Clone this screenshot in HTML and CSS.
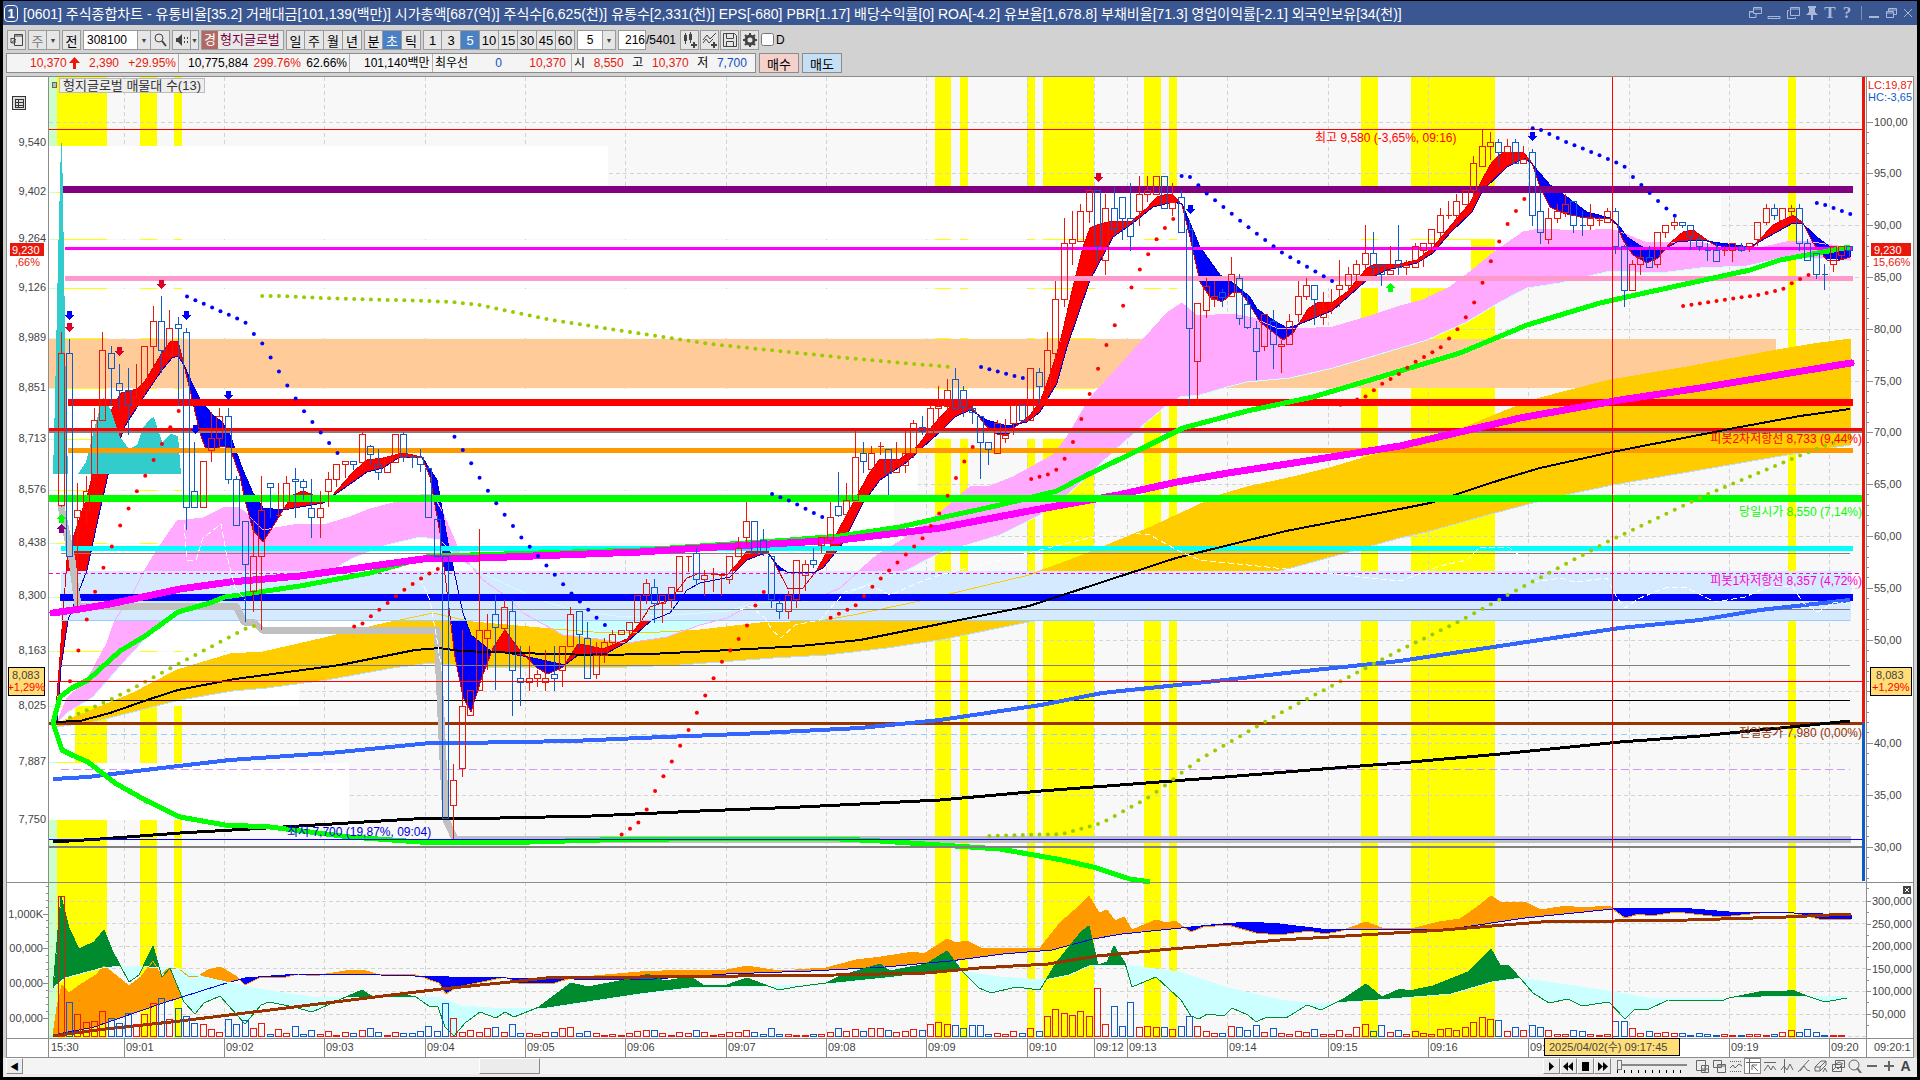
FILE: index.html
```html
<!DOCTYPE html>
<html lang="ko">
<head>
    <meta charset="UTF-8">
    <meta name="viewport" content="width=device-width, initial-scale=1.0">
    <title>[0601] 주식종합차트</title>
    <link rel="stylesheet" href="styles.css">
</head>
<body>
    <div class="window">
        <header class="titlebar">
            <span class="badge">1</span>
            <h1>[0601] 주식종합차트 - 유통비율[35.2] 거래대금[101,139(백만)] 시가총액[687(억)] 주식수[6,625(천)] 유통수[2,331(천)] EPS[-680] PBR[1.17] 배당수익률[0] ROA[-4.2] 유보율[1,678.8] 부채비율[71.3] 영업이익률[-2.1] 외국인보유[34(천)]</h1>
            <div class="window-buttons">
                <button aria-label="분리"><svg width="14" height="14"><path d="M5.5 1.5h8v6h-8zM8 7.5v4H1.500v-6h4M5 3h9M1 6h5"/></svg></button>
                <button aria-label="접기"><svg width="14" height="14"><path d="M1 10.500h12v2H1z"/></svg></button>
                <button aria-label="복제"><svg width="14" height="14"><path d="M4.500 1.500h9v8h-9zM4 3h10M3 4.500H1.500v8h8V11"/></svg></button>
                <button aria-label="고정"><svg width="14" height="14"><path class="fill" d="M3 0h8v2h-1v4l3 3H8v5H6V9H1l3-3V2H3z"/></svg></button>
                <button class="glyph" aria-label="글꼴">T</button>
                <button class="glyph" aria-label="도움말">?</button>
                <i class="bar"></i>
                <button aria-label="최소화"><svg width="12" height="14"><path class="fill" d="M1 10h10v2H1z"/></svg></button>
                <button aria-label="이전 크기"><svg width="12" height="14"><path d="M3.500 5V2.500h8v6H9M1.500 5.500h7v6h-7zM1 7h8M3 4h9"/></svg></button>
                <button aria-label="닫기"><svg width="12" height="14"><path d="M2 3l8 8M10 3l-8 8"/></svg></button>
            </div>
        </header>

        <div class="toolbar">
            <button class="btn" aria-label="패널"><svg width="14" height="14"><path d="M4.500 1.500h8v11h-8zM4 3h9M1 5.500h4M1 5v5M1 10l5-4M2 10h3V7"/></svg></button>
            <div class="group">
                <button class="btn muted">주</button><button class="btn arrow" aria-label="주기 선택">▼</button>
            </div>
            <button class="btn">전</button>
            <div class="group">
                <input class="code" type="text" value="308100" aria-label="종목코드"><button class="btn arrow" aria-label="종목 목록">▼</button><button class="btn" aria-label="찾기"><svg width="14" height="14"><circle cx="6" cy="5" r="4"/><path d="M9 8l4 5" stroke-width="2"/></svg></button>
            </div>
            <div class="group">
                <button class="btn" aria-label="소리"><svg width="14" height="14"><path class="fill" d="M1 5h2l4-4v12L3 9H1z"/><path d="M9 5h1M9 9h1M12 5h1M12 9h1" stroke-width="2"/></svg></button><button class="btn arrow slim" aria-label="소리 설정">▼</button>
            </div>
            <div class="group name">
                <span class="warn">경</span><span class="stock">형지글로벌</span>
            </div>
            <div class="group">
                <button class="btn">일</button><button class="btn">주</button><button class="btn">월</button><button class="btn">년</button>
            </div>
            <div class="group">
                <button class="btn">분</button><button class="btn on">초</button><button class="btn">틱</button>
            </div>
            <div class="group">
                <button class="btn">1</button><button class="btn">3</button><button class="btn on">5</button><button class="btn">10</button><button class="btn">15</button><button class="btn">30</button><button class="btn">45</button><button class="btn">60</button>
            </div>
            <div class="group">
                <input class="tick" type="text" value="5" aria-label="간격"><button class="btn arrow" aria-label="간격 선택">▼</button>
            </div>
            <div class="group count">
                <input class="bars" type="text" value="216" aria-label="봉 개수"><span>/5401</span>
            </div>
            <div class="group tools">
                <button class="btn" aria-label="봉 추가"><svg width="16" height="16"><path class="fill" d="M2 3h3v6H2zM7 2h3v6H7zM3 1h1v11H3zM8 0h1v11H8z"/><path d="M9 13h6M12 10v6" stroke-width="2"/></svg></button>
                <button class="btn" aria-label="지표 추가"><svg width="16" height="16"><path d="M1 8l4-5 3 4 6-6M1 11l3-4 3 4 4-4"/><path d="M9 13h6M12 10v6" stroke-width="2"/></svg></button>
                <button class="btn" aria-label="저장"><svg width="16" height="16"><path d="M1.500 1.500h11l2 2v11h-13zM4.500 1.500v5h7v-5M4.500 14.500v-5h7v5"/></svg></button>
                <button class="btn" aria-label="설정"><svg width="16" height="16"><circle cx="8" cy="8" r="4" stroke-width="3"/><path d="M8 1v2M8 13v2M1 8h2M13 8h2M3 3l2 2M11 11l2 2M13 3l-2 2M3 13l2-2" stroke-width="2"/></svg></button>
            </div>
            <label class="check"><input type="checkbox">D</label>
        </div>

        <div class="quote">
            <div class="cells">
                <div class="cell price"><b class="up">10,370<svg width="11" height="12"><path d="M5.500 0L11 6H7v6H4V6H0z"/></svg></b><b class="up">2,390</b><b class="up">+29.95%</b></div>
                <div class="cell volume"><b>10,775,884</b><b class="up">299.76%</b><b>62.66%</b></div>
                <div class="cell amount"><b>101,140백만</b></div>
                <div class="cell best"><b>최우선</b><b class="down">0</b><b class="up">10,370</b></div>
                <div class="cell range"><b>시</b><b class="up">8,550</b><b>고</b><b class="up">10,370</b><b>저</b><b class="down">7,700</b></div>
            </div>
            <button class="buy">매수</button>
            <button class="sell">매도</button>
        </div>

        <main class="panel">
            <svg id="chart" viewBox="7 77 1906 980" role="img" aria-label="형지글로벌 5초봉 차트"></svg>
            <span class="legend-mark"></span>
            <span class="legend">형지글로벌 매물대 수(13)</span>
        </main>

        <footer class="bottom">
            <button class="scroll-left" aria-label="왼쪽으로">◀</button>
            <div class="track"><div class="thumb"></div></div>
            <div class="player">
                <button aria-label="재생"><svg width="11" height="11"><path d="M3 1l5 4.500L3 10z"/></svg></button>
                <button aria-label="뒤로"><svg width="11" height="11"><path d="M5 1v9L0 5.500zM10 1v9L5 5.500z"/></svg></button>
                <button aria-label="정지"><svg width="11" height="11"><path d="M2 1h7v9H2z"/></svg></button>
                <button aria-label="앞으로"><svg width="11" height="11"><path d="M1 1v9l5-4.500zM6 1v9l5-4.500z"/></svg></button>
            </div>
            <div class="speed"><input type="range" min="0" max="9" value="0" aria-label="속도"><span class="notches"></span></div>
            <div class="draw">
                <button aria-label="창 추가"><svg width="14" height="14"><path d="M1.500 1.500h9v10h-9zM6.500 6.500h7v7h-7zM10 6v8M6 10h8"/></svg></button>
                <button aria-label="창 복사"><svg width="14" height="14"><path d="M1.500 1.500h8v7h-8zM5.500 5.500h8v8h-8zM5 7h9"/></svg></button>
                <button aria-label="폭 맞춤"><svg width="14" height="14"><path d="M1 2.500h12" stroke-dasharray="1 1"/><path d="M1 12.500h12" stroke-dasharray="1 1"/><path d="M1 9l3-3 2 3 4-4 3 2"/></svg></button>
                <button class="on" aria-label="십자선"><svg width="14" height="14"><path d="M0 3.500h14M3.500 0v14M6 6l6 6M6 6h5M6 6v5"/></svg></button>
                <button aria-label="수평선"><svg width="14" height="14"><path d="M1 3.500h12M1 12l4-6 3 5 2-4 3 4"/></svg></button>
                <button aria-label="수직선"><svg width="14" height="14"><path d="M4.500 0v14M1 11l3-4 3 4 3-6 3 6"/></svg></button>
                <button aria-label="추세선"><svg width="14" height="14"><path d="M1 13L12 1M3 12l4-5 3 4 3 1"/></svg></button>
                <button aria-label="전체 지우기"><svg width="14" height="14"><path d="M1 8l6-6h5L6 8zM1 8v4h5V8M6 12l6-6V2"/><path d="M9 13l2-4 2 4" /></svg></button>
                <button aria-label="차트 겹치기"><svg width="14" height="14"><path d="M4.500 1.500h9v7h-9zM1.500 5.500h9v7h-9zM2 11l3-3 2 2 3-3M5 5l3-2 4 2"/></svg></button>
                <button aria-label="확대경"><svg width="14" height="14"><circle cx="6" cy="6" r="5"/><path d="M9 9l4 5" stroke-width="2"/></svg></button>
                <button aria-label="축소"><svg width="14" height="14"><path d="M2 7h10" stroke-width="2"/></svg></button>
                <button aria-label="확대"><svg width="14" height="14"><path d="M2 7h10M7 2v10" stroke-width="2"/></svg></button>
                <button class="letter" aria-label="자동">A</button>
            </div>
        </footer>
    </div>
    <script src="chart.js"></script>
</body>
</html>
```
FILE: styles.css
```css
* {
    box-sizing: border-box;
}

body {
    margin: 0;
    background: #000;
    font-family: "Liberation Sans", "Noto Sans CJK KR", sans-serif;
    font-size: 13px;
    color: #000;
}

button,
input {
    font-family: inherit;
    font-size: 13px;
    padding: 0;
    margin: 0;
    border-radius: 0;
}

svg {
    display: block;
    fill: none;
    stroke: #444;
}

svg .fill {
    fill: #444;
    stroke: none;
}

.window {
    display: flex;
    flex-direction: column;
    margin: 1px 3px 3px;
    background: #d2d2d2;
}

/* title bar */
.titlebar {
    display: flex;
    align-items: center;
    height: 24px;
    padding: 0 3px 0 1px;
    background: #3a5792;
    color: #fff;
}

.badge {
    width: 14px;
    height: 17px;
    line-height: 15px;
    border: 1px solid #fff;
    border-radius: 4px;
    text-align: center;
    font-weight: bold;
}

.titlebar h1 {
    flex: 1;
    margin: 0 0 0 5px;
    font-size: 14px;
    font-weight: normal;
    white-space: nowrap;
    overflow: hidden;
}

.window-buttons {
    display: flex;
    align-items: center;
    gap: 5px;
}

.window-buttons button {
    border: 0;
    background: none;
    color: #a9b8d8;
}

.window-buttons svg {
    stroke: #a9b8d8;
}

.window-buttons .fill {
    fill: #a9b8d8;
}

.window-buttons .glyph {
    width: 12px;
    font-family: "Liberation Serif", serif;
    font-size: 17px;
    font-weight: bold;
    line-height: 14px;
}

.window-buttons .bar {
    width: 1px;
    height: 14px;
    margin: 0 1px 0 3px;
    background: #8090b0;
}

/* toolbar */
.toolbar {
    display: flex;
    gap: 2px;
    height: 26px;
    padding: 5px 4px 0;
}

.group {
    display: flex;
}

.btn {
    display: flex;
    align-items: center;
    justify-content: center;
    width: 19px;
    height: 20px;
    border: 1px solid #9a9a9a;
    background: #e6e6e6;
}

.group .btn + .btn,
.group input + .btn {
    border-left: 0;
}

.btn.on {
    background: #4a80c4;
    color: #fff;
}

.btn.muted {
    color: #777;
}

.btn.arrow {
    width: 13px;
    font-size: 7px;
    color: #444;
}

.btn.slim {
    width: 8px;
}

.toolbar input[type="text"] {
    height: 20px;
    border: 1px solid #9a9a9a;
    background: #fff;
    font-size: 12px;
}

.code {
    width: 55px;
    padding-left: 3px !important;
}

.tick {
    width: 26px;
    text-align: center;
}

.bars {
    width: 28px;
    text-align: right;
}

.count {
    width: 60px;
    font-size: 12px;
    line-height: 20px;
}

.name {
    width: 83px;
    height: 20px;
    border: 1px solid #9a9a9a;
    background: #e8e8e8;
    line-height: 18px;
}

.warn {
    width: 16px;
    background: #b06a66;
    color: #fff;
    text-align: center;
}

.stock {
    padding-left: 2px;
    color: #7a0040;
}

.tools {
    gap: 1px;
}

.tools .btn {
    border: 1px solid #9a9a9a !important;
}

.check {
    display: flex;
    align-items: center;
    gap: 2px;
    height: 19px;
    font-size: 12px;
}

.check input {
    width: 13px;
    height: 13px;
}

/* quote row */
.quote {
    display: flex;
    gap: 3px;
    height: 25px;
    padding: 2px 3px 3px;
}

.quote b {
    font-weight: normal;
}

.cells {
    display: flex;
    width: 750px;
    border: 1px solid #8c8c8c;
    background: #f4f4f4;
    font-size: 12px;
    line-height: 18px;
    white-space: nowrap;
}

.cell {
    display: flex;
    justify-content: space-between;
    padding: 0 2px;
    border-right: 1px solid #b0b0b0;
}

.cell:last-child {
    border: 0;
}

.price {
    width: 172px;
    padding-left: 23px;
}

.price b:first-child {
    display: flex;
    align-items: center;
    gap: 2px;
}

.price svg {
    fill: #e8190c;
    stroke: none;
}

.volume {
    width: 171px;
    padding-left: 9px;
}

.amount {
    width: 83px;
    padding-left: 14px;
}

.best {
    width: 139px;
    padding-right: 5px;
}

.range {
    width: 183px;
    padding-right: 8px;
}

.up {
    color: #e8190c;
}

.down {
    color: #0f4fc4;
}

.buy,
.sell {
    width: 40px;
    border: 1px solid #8c8c8c;
    background: #f6d0cb;
}

.sell {
    background: #c5dff5;
}

/* chart */
.panel {
    position: relative;
    margin: 0 3px;
    border: 1px solid #8c8c8c;
    background: #fff;
}

#chart {
    width: 100%;
    height: auto;
    stroke: none;
    shape-rendering: crispEdges;
}

#chart text {
    font-size: 11px;
}

#chart .note {
    font-size: 12px;
}

.legend {
    position: absolute;
    left: 52px;
    top: 1px;
    padding: 0 3px;
    border: 1px solid #bbb;
    background: #eee;
    color: #333;
    line-height: 13px;
}

.legend-mark {
    position: absolute;
    left: 45px;
    top: 5px;
    width: 5px;
    height: 6px;
    border: 1px solid #666;
    background: #bbb;
}

/* bottom bar */
.bottom {
    display: flex;
    align-items: center;
    height: 19px;
    padding: 0 3px 3px;
    background: #ececec;
}

.bottom button {
    display: flex;
    align-items: center;
    justify-content: center;
    width: 17px;
    height: 16px;
    border: 1px solid #888;
    border-top-color: #fff;
    border-left-color: #fff;
    background: #ececec;
    font-size: 9px;
}

.track {
    flex: 1;
    height: 16px;
    background: #f4f4f4;
}

.thumb {
    width: 61px;
    height: 16px;
    margin-left: 30%;
    border: 1px solid #888;
    border-top-color: #fff;
    border-left-color: #fff;
    background: #ececec;
}

.player {
    display: flex;
}

.player svg {
    fill: #000;
    stroke: none;
}

.speed {
    width: 82px;
    padding: 0 6px;
}

.speed input {
    display: block;
    width: 70px;
    height: 10px;
    appearance: none;
    background: linear-gradient(#888, #888) center / 100% 2px no-repeat;
}

.speed input::-webkit-slider-thumb {
    appearance: none;
    width: 5px;
    height: 10px;
    border: 1px solid #777;
    background: #eee;
}

.notches {
    display: block;
    height: 3px;
    background: repeating-linear-gradient(90deg, #000 0 1px, transparent 1px 7px);
}

.draw {
    display: flex;
}

.bottom .draw button {
    border: 0;
}

.draw svg {
    stroke: #666;
}

.bottom .draw .on {
    background: #fff;
    border: 1px solid #888;
}

.bottom .draw .letter {
    font-size: 14px;
    font-weight: bold;
    color: #444;
}
```
FILE: chart.js
```js
const chart = document.getElementById('chart');
const LEFT = 49, RIGHT = 1862;
const RED = '#e8190c', BLUE = '#105bc8';
const barX = i => 53.3 + 8.358 * i;

function add(tag, attrs, text, parent) {
    const el = document.createElementNS('http://www.w3.org/2000/svg', tag);
    for (const k in attrs) el.setAttribute(k, attrs[k]);
    if (text) el.textContent = text;
    (parent || chart).appendChild(el);
    return el;
}
const rect = (x1, y1, x2, y2, fill) => add('rect', { x: x1, y: y1, width: x2 - x1, height: y2 - y1, fill });
const path = (d, stroke, w, more) => add('path', { d, stroke, fill: 'none', 'stroke-width': w || 1, ...more });
const line = (pts, stroke, w, more) => add('polyline', { points: pts, stroke, fill: 'none', 'stroke-width': w || 1, 'stroke-linejoin': 'round', ...more });
const text = (x, y, str, fill, more) => add('text', { x, y, fill, ...more }, str);

function parse(str) {
    return str.trim().split(/\s+/).map(p => p.split(',').map(Number));
}

function at(pts, x) {
    for (let i = 1; i < pts.length; i++) {
        if (x <= pts[i][0]) {
            const [x0, y0] = pts[i - 1], [x1, y1] = pts[i];
            return y0 + (y1 - y0) * (x - x0) / (x1 - x0);
        }
    }
    return pts[pts.length - 1][1];
}

// area between two lines, coloured by which one is on top
function ribbon(a, b, up, down) {
    const pa = parse(a), pb = parse(b);
    const from = Math.max(pa[0][0], pb[0][0]);
    const to = Math.min(pa[pa.length - 1][0], pb[pb.length - 1][0]);
    let du = '', dd = '';
    for (let x = Math.ceil(from); x <= to; x++) {
        const ya = Math.round(at(pa, x)), yb = Math.round(at(pb, x));
        if (ya < yb) du += `M${x + 0.5} ${ya}V${yb}`;
        else if (ya > yb) dd += `M${x + 0.5} ${yb}V${ya}`;
    }
    path(du, up);
    path(dd, down);
}

function dots(str, color) {
    const pts = parse(str);
    for (let i = 0; i < 216; i++) {
        const x = barX(i);
        if (x < pts[0][0] - 2 || x > pts[pts.length - 1][0] + 2) continue;
        const cy = at(pts, Math.max(x, pts[0][0]));
        add('circle', { cx: x, cy, r: 2, fill: color, 'shape-rendering': 'auto' });
    }
}

function arrow(x, y, dir, color) {
    const d = dir === 'down' ? 'M-2 -4H3V0H5L0.5 5L-4 0H-2Z' : 'M-2 4H3V0H5L0.5 -5L-4 0H-2Z';
    add('path', { d, fill: color, transform: `translate(${x} ${y})` });
}

// ---- background ----
rect(LEFT, 77, RIGHT + 4, 1038, '#f8f8f8');
rect(LEFT, 77, 57, 1038, '#ccffcc');
[[57, 107], [140, 157], [174, 182], [935, 951], [960, 968], [1027, 1035], [1043, 1094], [1144, 1161],
 [1169, 1177], [1361, 1378], [1411, 1495], [1788, 1796]].forEach(b => rect(b[0], 77, b[1], 1038, '#ffff00'));

const minutes = [[124, '09:01'], [224, '09:02'], [324, '09:03'], [425, '09:04'], [525, '09:05'], [625, '09:06'],
    [726, '09:07'], [826, '09:08'], [926, '09:09'], [1027, '09:10'], [1094, '09:12'], [1127, '09:13'], [1227, '09:14'],
    [1328, '09:15'], [1428, '09:16'], [1528, '09:'], [1629, ''], [1729, '09:19'], [1829, '09:20']];
minutes.forEach(m => path(`M${m[0] + 0.5} 77V1038`, '#d3d3d3', 1, { 'stroke-dasharray': '4 3' }));
const levels = [122, 173, 225, 277, 329, 381, 432, 484, 536, 588, 640, 691, 743, 795, 847];
levels.forEach(y => path(`M${LEFT} ${y + 0.5}H${RIGHT}`, '#d3d3d3', 1, { 'stroke-dasharray': '4 3' }));
[901, 923, 946, 968, 991, 1014, 1036].forEach(y => path(`M${LEFT} ${y + 0.5}H1866`, '#d3d3d3', 1, { 'stroke-dasharray': '4 3' }));

// ---- price profile ----
const profile = [[145, 192, 608], [192, 239, 1721], [239, 288, 1471], [288, 338, 1190], [338, 388, 1776], [388, 439, 1098],
    [439, 490, 918], [490, 543, 894], [543, 597, 590], [597, 651, 450], [651, 706, 299], [706, 762, 75], [762, 820, 349]];
profile.forEach((p, i) => rect(LEFT, p[0] + 1, p[2], p[1], i === 4 ? '#ffcc99' : '#fff'));

// ---- clouds and ribbon ----
const cloudA = `57,723 67,698 87,680 107,643 115,620 133,593 143,573 157,550 177,521 203,518 223,508 237,507 245,512 263,530
    293,525 327,524 350,517 370,509 397,502 420,495 433,494 443,513 460,553 483,580 507,597 523,613 563,635 583,637 627,643
    667,637 700,625 727,618 760,600 793,603 813,600 840,588 860,570 877,555 907,537 923,523 940,513 960,495 970,487 990,486
    1013,477 1053,455 1067,437 1090,398 1113,373 1140,343 1167,313 1182,303 1197,316 1233,314 1253,318 1277,328 1300,329
    1333,327 1367,317 1400,306 1423,300 1450,287 1470,272 1493,253 1523,232 1540,229 1580,231 1610,229 1623,233 1647,243
    1700,242 1733,250 1760,248 1790,241 1813,242 1850,248`;
const cloudB = `57,723 67,713 93,697 123,663 147,637 177,608 200,602 227,590 233,583 283,582 327,573 353,558 387,545 420,537
    440,540 453,553 460,560 490,577 540,600 573,610 623,617 673,615 727,611 760,602 793,603 840,597 873,582 907,570 940,553
    1000,535 1040,515 1067,495 1087,477 1113,452 1140,428 1167,405 1180,397 1200,395 1227,387 1247,382 1290,378 1333,368
    1367,358 1400,348 1427,340 1467,322 1500,302 1527,288 1560,283 1610,271 1660,273 1700,268 1747,266 1773,260 1813,258 1850,261`;
const bandTop = `57,723 80,715 133,693 177,670 230,654 263,652 320,639 373,626 400,620 433,613 450,617 473,622 540,628 593,632
    640,633 700,630 760,623 820,621 853,615 920,601 1029,575 1078,557 1151,527 1220,495 1247,487 1293,477 1333,467 1373,455
    1420,442 1463,428 1507,410 1540,398 1610,380 1687,367 1777,350 1813,344 1850,339`;
const bandBottom = `57,727 93,722 133,712 180,700 233,691 267,688 327,680 393,668 430,663 480,667 627,667 680,665 773,658 827,655
    887,648 940,640 1029,622 1150,597 1273,573 1400,538 1427,532 1495,513 1533,503 1570,494 1613,485 1683,473 1787,455 1850,445`;
const fast = `53,723 55,723 60,657 67,560 70,547 78,523 87,497 97,457 110,413 121,393 137,389 145,381 162,353 170,342 178,341
    184,365 190,390 200,433 205,447 212,450 222,446 230,448 240,476 245,500 253,530 263,542 272,528 283,510 293,495 303,491
    313,495 323,503 333,495 353,472 367,460 383,458 403,453 422,457 430,477 440,533 448,600 455,657 463,697 471,712 482,677
    493,648 505,630 518,648 537,668 548,674 563,667 578,644 590,646 603,649 627,639 640,623 650,607 670,600 687,578 700,573
    727,575 738,563 750,547 763,542 773,560 788,589 803,588 817,570 837,533 853,503 870,472 880,459 900,459 917,447 933,425
    950,407 960,405 972,407 985,425 997,434 1007,436 1015,427 1030,415 1040,402 1047,383 1057,353 1063,330 1073,287 1083,247
    1090,228 1100,224 1113,221 1132,221 1147,208 1157,197 1167,194 1173,195 1182,205 1190,237 1200,282 1210,297 1222,302
    1232,293 1240,292 1248,302 1260,322 1283,340 1293,333 1300,322 1308,309 1317,303 1333,302 1347,292 1367,268 1375,264
    1400,264 1417,260 1433,247 1453,223 1470,203 1482,180 1492,162 1503,152 1523,152 1532,163 1540,187 1550,207 1563,213
    1580,217 1610,219 1617,225 1623,240 1633,255 1647,263 1658,258 1670,243 1683,232 1693,230 1710,242 1723,250 1753,247
    1773,225 1793,215 1803,223 1813,243 1827,260 1837,261 1850,257`;
const slow = `53,723 57,723 61,667 68,620 87,570 100,510 108,475 117,448 125,426 143,398 162,370 172,358 178,356 184,365 192,383
    202,403 213,415 222,422 230,435 243,470 253,493 263,508 283,510 300,507 323,503 333,496 353,482 367,472 383,468 400,457
    422,457 437,480 448,543 463,613 471,635 492,652 507,653 533,658 565,665 578,655 607,653 627,642 652,620 670,613 687,590
    700,583 730,577 747,560 760,555 768,553 777,565 787,572 813,573 823,568 843,543 863,503 880,480 907,462 923,447 940,432
    955,417 970,410 987,420 1007,426 1027,422 1040,412 1057,383 1067,347 1090,280 1113,237 1133,223 1153,207 1173,202
    1182,204 1193,230 1200,247 1220,275 1233,283 1250,297 1257,309 1273,320 1287,328 1297,325 1317,317 1333,310 1367,280
    1387,270 1417,263 1433,253 1450,233 1472,212 1483,190 1507,167 1525,158 1533,165 1550,185 1567,197 1587,212 1610,218
    1620,227 1627,237 1647,250 1663,250 1677,242 1700,240 1720,243 1750,247 1793,223 1803,224 1817,237 1830,247 1850,250`;

ribbon(bandTop, bandBottom, '#ffcc00', '#ffcc00');
line(bandBottom, '#bbddff');
ribbon(cloudA, cloudB, '#ffaaff', '#ccffff');
ribbon(fast, slow, '#ff0000', '#0000ff');
rect(61, 571, 1851, 621, '#d5eaff');
line(bandTop, '#ffcc00');
line(cloudA, '#ffaaff');
line(cloudB, '#ccffff');
line(fast, '#e00000');
line(slow, '#0000cc');

// opening volume shape
add('polygon', { points: '53,474 55,400 58,260 61,143 62,143 64,260 66,400 68,474', fill: '#33cccc' });
add('polygon', { points: '78,474 86,462 94,430 103,397 111,410 120,437 129,449 137,445 143,428 149,420 154,417 162,442 171,434 178,436 181,474', fill: '#33cccc' });

// ---- level lines ----
const hline = (x1, y, h, color, x2) => rect(x1, y, x2 || 1853, y + h, color);
const dashed = (x, y, color, x2, dash) => path(`M${x} ${y + 0.5}H${x2}`, color, 1, { 'stroke-dasharray': dash });
hline(LEFT, 129, 1, '#ff0000', RIGHT);
hline(63, 186, 7, '#800080');
hline(65, 247, 3, '#ff00ff');
hline(65, 276, 5, '#ff99cc');
hline(68, 399, 7, '#ff0000');
hline(LEFT, 431, 2, '#808080', RIGHT);
hline(LEFT, 428, 3, '#ff0000', RIGHT);
hline(68, 448, 5, '#ff9900');
hline(LEFT, 722, 3, '#993300', RIGHT);
hline(61, 546, 5, '#00ffff');
hline(61, 553, 1, '#808080', 1850);
hline(60, 594, 7, '#0000ff');
hline(61, 609, 1, '#808080', 1850);
hline(61, 620, 1, '#99ccff', 1850);
hline(61, 665, 1, '#808080', 1850);
hline(61, 700, 1, '#000', 1850);
dashed(LEFT, 573, '#ff00cc', RIGHT, '4 3');
dashed(61, 734, '#99ccff', RIGHT, '6 4');
dashed(61, 769, '#cc99ff', 1850, '8 4');

// ---- long averages ----
line('61,506 72,560 78,606 236,606 244,622 255,623 262,630 437,630 443,760 446,820 455,839 1851,839', '#c0c0c0', 7);
line('53,779 88,777 170,767 230,760 330,753 430,743 460,743 572,741 640,738 740,734 860,728 940,720 1041,705 1102,693 1225,680 1286,673 1400,661 1500,646 1540,640 1620,628 1700,620 1760,610 1850,600', '#3366ff', 4);
line('53,842 100,839 180,833 250,829 430,818 500,818 592,816 700,811 800,807 940,800 1041,791 1225,777 1347,767 1400,763 1500,754 1620,742 1700,736 1800,726 1850,721', '#000', 3);
line('53,722 80,721 110,713 150,699 178,690 235,679 340,665 415,650 440,648 460,651 550,654 600,655 650,654 750,649 800,646 860,640 900,632 940,624 1029,606 1078,590 1176,558 1286,531 1400,509 1430,503 1500,480 1540,468 1612,452 1740,427 1800,416 1850,409', '#000', 2);
line('53,723 60,697 72,688 88,680 120,651 145,636 178,612 210,603 225,597 300,586 370,573 430,556 470,555 640,550 790,540 840,536 900,527 940,518 1000,505 1057,491 1087,475 1143,448 1183,428 1247,411 1313,397 1367,381 1400,371 1460,353 1527,325 1600,303 1640,294 1750,270 1780,260 1850,247', '#00ff00', 5);
line('53,723 62,750 72,755 88,762 115,783 145,800 180,817 225,825 270,827 350,837 420,842 530,842 600,840 670,839 840,839 880,841 940,845 1000,849 1062,860 1093,867 1130,879 1150,882', '#00ff00', 5);
line('53,613 80,609 110,604 180,589 230,582 300,576 430,558 480,558 560,555 640,552 700,548 770,544 840,540 940,528 1029,511 1118,495 1177,482 1228,473 1300,462 1400,446 1520,418 1620,400 1700,388 1790,373 1851,363', '#ff00ff', 7, { 'stroke-linecap': 'round' });
hline(LEFT, 495, 7, '#00ff00', RIGHT);
hline(LEFT, 839, 1, '#0000ff', RIGHT);
hline(LEFT, 846, 2, '#808080', RIGHT);
line('184,524 187,560 196,560 203,538 221,524 226,552 235,588 247,602', '#fff', 1, { 'stroke-dasharray': '6 3' });
line('420,578 430,600 437,640 445,690', '#fff', 1, { 'stroke-dasharray': '6 3' });
line('740,610 750,606 765,618 772,630 781,638 795,625 820,620 845,592 870,585 890,595 925,580 940,575 1080,540 1120,532 1150,535 1177,550 1200,560 1400,581 1440,566 1467,560 1480,547 1510,548 1525,560 1535,582 1560,578 1575,582 1607,578 1617,598 1625,608 1640,598 1665,588 1685,587 1715,602 1745,597 1770,586 1793,587 1803,603 1818,612 1835,602 1850,604', '#fff', 1, { 'stroke-dasharray': '6 3' });

// ---- parabolic dots ----
['262,296 280,296 320,298 428,301 453,302 479,305 551,320 710,344 857,359 950,367',
 '69,718 78,714 94,707 110,700 145,682 178,664 203,651 245,629 252,626',
 '989,836 1062,834 1102,823 1151,796 1200,759 1286,710 1400,650 1456,623 1530,583 1607,542 1708,494 1792,459 1816,449 1850,437'
].forEach(p => dots(p, '#99cc00'));
['186,296 245,322 253,333 262,343 287,385 303,410 337,453', '454,436 471,463 479,477 496,503 521,537 546,565 571,593 604,625',
 '772,494 788,500 822,517', '981,367 1022,378', '1181,176 1190,177 1206,193 1248,227 1281,252 1332,281',
 '1532,128 1541,130 1566,142 1599,155 1624,166 1633,177 1658,201 1675,216', '1817,203 1825,205 1850,214'
].forEach(p => dots(p, '#0000ff'));
['69,685 78,652 86,622 94,595 103,569 119,528 136,493 144,478 161,446 170,428 178,411', '353,627 362,624 370,617 404,590 420,579 437,569',
 '621,835 638,823 646,811 654,793 671,763 688,731 704,698 721,663 738,640 746,628 754,608 763,592',
 '830,618 855,606 872,587 897,563 922,539 939,514 955,480 964,462 972,447',
 '1031,479 1047,475 1056,470 1064,460 1073,442 1081,420 1089,396 1098,369 1106,346 1123,306 1139,271 1156,240 1165,228 1173,219',
 '1340,405 1365,397 1382,384 1399,374 1415,362 1440,348 1457,330 1466,317 1474,303 1482,284 1491,261 1499,242 1507,225 1516,211 1524,199',
 '1683,306 1716,301 1758,295 1783,289 1792,283 1808,275'
].forEach(p => dots(p, '#ff0000'));

// ---- candles: colour high,top,bottom,low ----
const candles = `r332,353,505,507 b339,353,556,556 r483,510,517,607 r476,491,510,525 r408,420,476,490 r332,350,420,420
b346,353,368,406 b364,383,390,409 b368,390,405,435 r364,397,405,408 r346,346,387,397 r306,321,346,370 b296,321,350,373
r310,328,355,355 b317,324,328,406 b328,332,507,530 b442,491,507,507 r461,461,507,507 r412,438,450,462 r408,416,438,448
b408,416,479,484 b476,479,525,525 b521,521,564,622 r520,556,591,612 r476,510,556,630 b483,483,487,518 r483,515,515,515
r476,483,508,510 b468,479,481,518 b479,481,487,500 b479,508,517,538 r491,508,517,538 r472,479,491,507 r464,464,479,487
r461,461,464,478 b461,461,464,470 r432,434,462,470 b445,446,454,465 b449,464,472,480 r457,457,472,472 r434,434,462,462
b432,434,457,462 b456,457,457,468 b449,457,464,472 b466,468,517,517 b515,519,556,556 b556,556,818,818 r764,780,805,839
r630,706,768,777 r690,690,715,715 r529,630,690,690 r614,630,638,670 b595,614,627,690 r600,607,628,635 b600,611,670,716
b646,678,682,706 r646,678,682,691 r670,674,678,687 r650,678,682,691 b646,674,678,691 r646,646,670,687 r607,614,646,646
b611,611,634,649 b622,638,678,678 r642,655,674,679 r638,642,655,663 r630,634,642,647 r630,630,634,634 r622,622,630,636
r595,595,622,622 r579,583,595,604 b579,587,603,623 r595,595,603,623 r587,587,599,608 r556,556,591,591 r556,556,556,572
b548,553,579,585 r570,575,579,596 r568,574,574,592 r575,575,575,596 r556,556,579,584 r537,548,556,556 r502,521,537,545
b521,521,553,553 b529,540,553,556 b556,556,599,608 b599,603,611,619 r591,595,611,619 r560,560,599,608 r560,564,575,591
b548,560,564,568 r537,537,545,553 r502,517,540,547 b472,506,515,517 r483,500,514,514 r431,457,500,500 b442,453,461,473
r446,453,469,469 r442,446,446,455 b449,449,473,495 r442,461,472,473 r431,453,465,473 r420,423,453,458 b416,427,431,435
r406,408,433,433 r386,406,408,428 r379,390,406,417 b368,379,408,408 b386,390,406,417 b405,408,412,424 b416,416,442,479
b442,442,449,465 r420,423,453,453 r419,434,438,443 r405,405,423,435 b405,405,420,420 r368,368,420,420 b368,372,386,405
r332,350,390,405 r281,299,353,370 r218,243,299,307 r211,239,243,265 r204,211,241,241 r190,190,211,223 b190,190,246,262
r194,208,260,275 b187,208,229,237 b197,197,218,240 b183,218,236,251 r176,194,211,226 r176,190,194,202 r176,176,194,194
b176,176,208,208 r183,202,208,216 b190,197,232,232 b220,229,328,405 r303,303,361,405 r278,286,310,318 r281,296,299,307
b289,292,297,307 r257,274,296,296 b274,278,318,325 b295,304,327,329 b321,328,351,380 r314,314,346,351 b310,321,344,369
r340,344,346,373 r314,321,344,344 r281,296,314,322 r278,285,296,300 b285,285,299,325 r292,310,317,325 r289,303,303,314
r260,285,289,307 r267,274,285,291 r260,264,274,281 r225,253,264,270 b232,253,266,275 b265,265,274,286 r246,270,274,274
b225,260,267,275 r260,265,267,275 r243,246,267,267 r243,243,250,267 r229,229,243,250 r208,215,232,243 r201,215,215,219
r194,201,215,223 r190,190,204,204 r156,163,190,200 r129,146,166,166 r132,142,146,160 b139,142,152,167 r139,146,152,163
b139,142,163,163 r146,159,163,163 b149,152,215,226 b190,211,232,244 r208,218,239,244 r204,211,218,223 r194,204,212,217
b201,201,225,233 b211,225,225,236 r204,218,225,230 r217,220,220,226 r208,211,222,222 b208,211,246,254 b245,246,290,307
r260,264,290,290 r250,257,264,275 b246,257,267,267 r232,232,264,268 r225,225,232,238 r218,222,225,230 b222,222,225,228
b225,225,236,250 b235,239,246,251 b243,250,250,261 b243,250,261,261 r246,250,250,256 r243,243,250,262 b243,246,250,252
r243,243,246,252 r222,222,239,246 r204,208,222,225 b204,208,215,220 r208,208,220,225 r205,208,211,218 b204,208,243,251
b239,243,260,260 b253,253,274,279 b264,274,274,290 r246,246,264,272 r246,246,255,259 b246,246,250,257`.trim().split(/\s+/);

candles.forEach((c, n) => {
    const x = Math.round(barX(n + 1)) - 0.5;
    const [high, top, bottom, low] = c.slice(1).split(',').map(Number);
    const d = `M${x} ${high}V${top}M${x} ${bottom}V${low}M${x - 3} ${top + 0.5}H${x + 3}V${bottom + 0.5}H${x - 3}Z`;
    path(d, c[0] === 'r' ? RED : BLUE);
});

[[161, 284], [69, 327], [119, 351], [1098, 177]].forEach(p => arrow(p[0], p[1], 'down', '#dc0028'));
[[69, 315], [186, 315], [228, 395], [195, 429], [1190, 209], [1532, 136]].forEach(p => arrow(p[0], p[1], 'down', '#0000ff'));
arrow(61, 519, 'up', '#00ff00');
arrow(61, 529, 'up', '#800080');
arrow(1390, 288, 'up', '#00ff00');

const note = { class: 'note' };
text(1315, 142, '최고 9,580 (-3,65%, 09:16)', '#ff0000', note);
text(287, 836, '최저 7,700 (19,87%, 09:04)', '#0000dd', note);
[[443, '피봇2차저항선 8,733 (9,44%)', '#ff0000'], [516, '당일시가 8,550 (7,14%)', '#00ff00'],
 [585, '피봇1차저항선 8,357 (4,72%)', '#ff00cc'], [737, '전일종가 7,980 (0,00%)', '#993300']
].forEach(t => text(1862, t[0], t[1], t[2], { class: 'note', 'text-anchor': 'end' }));

// ---- volume pane ----
const osc = `53,1035 57,1007 62,985 69,993 80,985 96,975 104,966 118,977 129,986 141,977 153,961 161,975 169,968 178,968 188,976
    198,976 208,970 220,967 229,972 237,977 245,985 261,977 282,978 298,974 314,976 345,971 363,970 376,974 416,975 439,983
    446,994 457,987 482,982 506,977 518,983 555,983 571,978 640,972 685,970 722,971 747,966 779,971 826,968 856,960 881,957
    913,952 924,954 947,939 956,943 967,941 983,949 1040,948 1060,923 1077,908 1089,896 1099,913 1107,910 1115,921 1124,917
    1132,930 1156,920 1167,923 1175,921 1191,932 1203,927 1228,925 1256,933 1280,935 1309,931 1325,934 1341,931 1366,922
    1382,928 1411,929 1439,922 1460,919 1476,908 1491,896 1500,902 1525,902 1541,910 1566,906 1582,908 1609,906 1625,918
    1639,914 1651,916 1676,912 1721,917 1770,912 1794,913 1819,919 1851,919`;
const oscBase = `53,1035 94,1027 163,1003 220,985 245,978 298,974 380,975 449,977 506,978 640,980 726,974 811,971 885,967 950,961
    1003,954 1052,950 1093,939 1122,934 1171,929 1211,925 1248,922 1280,924 1321,929 1451,929 1525,918 1613,909 1680,908
    1729,912 1794,913 1851,915`;
const flow = `53,988 61,896 69,928 79,949 94,942 104,930 112,950 129,982 139,975 153,946 162,977 170,968 184,1002 195,1014
    204,1003 220,996 245,1024 261,1005 269,1002 294,1007 312,1012 339,1000 362,990 373,997 400,994 416,997 429,1006 438,1007
    445,1027 454,1036 465,1023 480,1012 496,1018 505,1012 514,1017 539,1007 571,983 588,987 640,977 648,974 664,981 691,977
    703,985 724,986 747,978 779,990 795,987 826,983 840,976 880,964 890,971 926,964 947,951 962,971 979,988 991,993 1016,987
    1040,990 1056,963 1081,932 1089,926 1098,965 1107,962 1114,946 1125,963 1132,987 1156,977 1181,1000 1191,1016 1199,1019
    1207,1014 1224,1016 1232,1008 1248,1015 1256,1022 1267,1017 1286,1018 1307,1005 1321,1010 1345,998 1366,984 1382,997
    1400,989 1409,991 1433,986 1468,972 1491,949 1500,965 1508,965 1521,979 1533,993 1549,1003 1568,999 1582,1006 1609,1002
    1625,1019 1635,1009 1649,1009 1668,1000 1721,1001 1729,998 1764,991 1782,992 1792,990 1807,996 1825,1002 1847,998`;
const flowBase = `53,988 65,978 102,968 122,966 176,968 204,977 253,988 310,997 408,997 441,998 461,1006 506,1009 547,1008 640,994
    689,988 816,985 885,978 954,970 999,977 1044,980 1069,975 1089,966 1124,965 1179,972 1228,988 1280,1000 1317,1004
    1378,1000 1451,994 1492,982 1521,978 1615,992 1647,998 1729,998 1794,996 1847,997`;
ribbon(osc, oscBase, '#ff9900', '#0000ff');
ribbon(flow, flowBase, '#008c2e', '#ccffff');
line(osc, '#ff9900');
line(oscBase, '#0000ff');
line(flowBase, '#ccffff');
line(flow, '#008c2e');
line('53,1036 67,1034 106,1029 180,1021 278,1009 367,998 441,989 510,982 555,977 640,977 836,975 926,973 979,968 1048,964 1097,956 1171,949 1280,940 1362,935 1443,930 1541,922 1615,921 1688,920 1786,917 1851,914', '#993300', 3);

const volumes = [140, 34, 22, 14, 15, 25, 18, 13, 23, 12, 22, 33, 38, 17, 28, 20, 13, 12, 7, 4, 17, 12, 16, 8, 13, 2, 7, 3, 10, 2,
    6, 2, 5, 1, 4, 3, 6, 8, 4, 1, 4, 3, 3, 5, 10, 5, 33, 18, 4, 6, 4, 8, 9, 4, 12, 3, 3, 2, 4, 4, 8, 9, 3, 5, 3, 1, 2, 1, 3, 5,
    6, 6, 3, 1, 4, 3, 6, 4, 1, 2, 4, 4, 6, 4, 2, 8, 2, 2, 1, 1, 2, 2, 4, 8, 5, 7, 5, 8, 8, 6, 4, 5, 7, 6, 12, 14, 12, 11, 8, 11,
    11, 2, 3, 2, 5, 3, 8, 5, 20, 27, 23, 21, 25, 20, 48, 12, 30, 10, 34, 9, 10, 9, 9, 7, 10, 20, 10, 5, 3, 3, 10, 9, 6, 11, 4, 8,
    3, 2, 5, 4, 7, 2, 2, 6, 2, 9, 12, 5, 11, 4, 6, 2, 5, 3, 2, 7, 8, 6, 9, 14, 19, 17, 16, 5, 9, 6, 11, 9, 6, 2, 2, 6, 5, 2, 1,
    2, 15, 15, 8, 3, 5, 3, 4, 3, 3, 1, 3, 2, 1, 2, 1, 1, 2, 2, 1, 2, 4, 6, 4, 7, 4, 1, 1, 1];
volumes.forEach((v, n) => {
    const x = Math.round(barX(n + 1)) - 0.5;
    path(`M${x - 3} 1036.5V${1036.5 - v}H${x + 3}V1036.5Z`, candles[n][0] === 'r' || v === 48 ? RED : BLUE);
});

// ---- crosshair ----
hline(LEFT, 681, 1, '#ff0000', RIGHT);
rect(1612, 77, 1613, 1038, '#ff0000');

// ---- axes ----
rect(RIGHT, 77, 1865, 723, RED);
rect(RIGHT, 723, 1865, 881, BLUE);
rect(1866, 77, 1913, 1038, '#fff');
rect(7, 77, 48, 1038, '#fff');
path('M48.5 77V1057M1866.5 77V1057M7 882.5H1913M7 1038.5H1913', '#8c8c8c');
rect(7, 1039, 48, 1057, '#fff');

const grey = '#444';
[[146, '9,540'], [195, '9,402'], [242, '9,264'], [291, '9,126'], [341, '8,989'], [391, '8,851'], [442, '8,713'], [493, '8,576'],
 [546, '8,438'], [599, '8,300'], [654, '8,163'], [709, '8,025'], [765, '7,887'], [823, '7,750']
].forEach(t => text(46, t[0], t[1], grey, { 'text-anchor': 'end' }));

levels.forEach((y, i) => {
    path(`M1867 ${y + 0.5}h6`, '#8c8c8c');
    for (let k = 1; k < 5; k++) path(`M1867 ${Math.round(y + k * 10.36) + 0.5}h2`, '#8c8c8c');
    if (i !== 11) text(1874, y + 4, (100 - i * 5) + ',00', grey);
});
text(1868, 89, 'LC:19,87', RED);
text(1868, 101, 'HC:-3,65', '#105bc8');

['300,000', '250,000', '200,000', '150,000', '100,000', '50,000'].forEach((t, i) => {
    const y = 901 + Math.round(i * 22.6);
    path(`M1867 ${y + 0.5}h4M1867 ${y + 11.5}h2`, '#8c8c8c');
    text(1872, y + 4, t, grey);
});
[[914, '1,000K'], [948, '00,000'], [983, '00,000'], [1018, '00,000']].forEach(t => {
    path(`M43 ${t[0] + 0.5}h5`, '#8c8c8c');
    for (let k = 1; k < 5; k++) path(`M46 ${t[0] + k * 7 - 34.500}h2`, '#8c8c8c');
    text(43, t[0] + 4, t[1], grey, { 'text-anchor': 'end' });
});

text(51, 1051, '15:30', grey);
minutes.forEach(m => {
    if (!m[1]) return;
    path(`M${m[0] + 0.5} 1038V1057`, '#8c8c8c');
    text(m[0] + 2, 1051, m[1], grey);
});
text(1874, 1051, '09:20:1', grey);

function tag(x1, y1, x2, y2, fill, border) {
    add('rect', { x: x1 + 0.5, y: y1 + 0.5, width: x2 - x1 - 1, height: y2 - y1 - 1, fill, stroke: border });
}
tag(1544, 1038, 1680, 1056, '#ffdd77', '#000');
text(1549, 1051, '2025/04/02(수) 09:17:45', grey);

tag(10, 243, 44, 256, RED, RED);
text(12, 254, '9,230', '#fff');
text(40, 266, ',66%', RED, { 'text-anchor': 'end' });
tag(1871, 243, 1911, 256, RED, RED);
text(1874, 254, '9,230', '#fff');
text(1873, 266, '15,66%', RED);
tag(8, 667, 45, 696, '#ffdd77', '#000');
text(12, 679, '8,083', grey);
text(45, 691, '+1,29%', '#ff0000', { 'text-anchor': 'end' });
tag(1870, 667, 1912, 696, '#ffdd77', '#000');
text(1876, 679, '8,083', grey);
text(1872, 691, '+1,29%', '#ff0000');

// pane buttons
add('path', { d: 'M12.500 96.500h13v13h-13zM15 99.500h8v8h-8zM15 102.500h8M18.500 99v8M15 105h8', fill: '#ddd', stroke: '#333' });
add('path', { d: 'M1903 886h8v8h-8z', fill: '#444' });
path('M1905 888l4 4M1909 888l-4 4', '#fff');
```
